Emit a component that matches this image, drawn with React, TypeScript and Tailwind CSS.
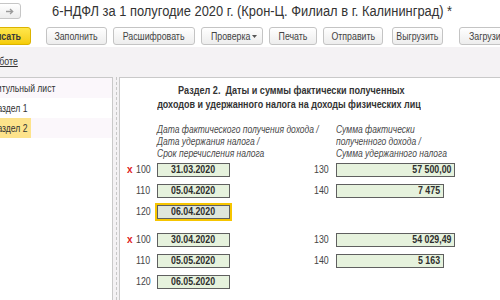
import React from 'react';

const FONT = "'Liberation Sans', Arial, sans-serif";

interface Row {
  code: string;
  value: string;
  mark?: boolean;
  focused?: boolean;
  rightCode?: string;
  rightValue?: string;
  rightWidth?: string;
}

const groups: Row[][] = [
  [
    { code: '100', value: '31.03.2020', mark: true, rightCode: '130', rightValue: '57 500,00', rightWidth: 'w-[119px]' },
    { code: '110', value: '05.04.2020', rightCode: '140', rightValue: '7 475', rightWidth: 'w-[108px]' },
    { code: '120', value: '06.04.2020', focused: true },
  ],
  [
    { code: '100', value: '30.04.2020', mark: true, rightCode: '130', rightValue: '54 029,49', rightWidth: 'w-[119px]' },
    { code: '110', value: '05.05.2020', rightCode: '140', rightValue: '5 163', rightWidth: 'w-[108px]' },
    { code: '120', value: '06.05.2020' },
  ],
];

const toolbar = [
  { label: 'Заполнить', w: 'w-[61px]', ml: 'ml-[15px]' },
  { label: 'Расшифровать', w: 'w-[82px]', ml: 'ml-[6px]' },
  { label: 'Проверка', w: 'w-[62px]', ml: 'ml-[6px]', menu: true },
  { label: 'Печать', w: 'w-[48px]', ml: 'ml-[6px]' },
  { label: 'Отправить', w: 'w-[60px]', ml: 'ml-[6px]' },
  { label: 'Выгрузить', w: 'w-[51px]', ml: 'ml-[9px]' },
  { label: 'Загрузить', w: 'w-[60px]', ml: 'ml-[16px]' },
];

// the source picture is squeezed horizontally, so text is narrowed with scale-x
function Field({ value, width, align, focused }: { value: string; width: string; align: 'center' | 'right'; focused?: boolean }) {
  const box = (
    <div
      className={`${width} h-[14px] border border-[#5f5f5f] flex items-center text-[10px] font-bold text-[#2e2e2e] leading-none whitespace-nowrap ${
        focused ? 'bg-[#dfe6dc]' : 'bg-[#e6f2dd]'
      } ${align === 'center' ? 'justify-center' : 'justify-end pr-[3px]'}`}
    >
      <span className={`inline-block scale-x-[0.88] ${align === 'center' ? 'origin-center' : 'origin-right'}`}>{value}</span>
    </div>
  );
  if (!focused) return box;
  return <div className="-m-[2px] border-2 border-[#f6c500]">{box}</div>;
}

export default function App() {
  return (
    <div className="w-[500px] h-[300px] overflow-hidden bg-white text-[#333]" style={{ fontFamily: FONT }}>
      {/* title line */}
      <div className="flex items-center h-[16px] mt-[3px]">
        <button className="-ml-[4px] w-[25px] h-[16px] rounded-[3px] border border-[#c6c6c6] bg-gradient-to-b from-white to-[#ececec] flex items-center justify-center">
          <svg width="8" height="7" viewBox="0 0 8 7" className="ml-[2px]">
            <path d="M0 3.5h6.5M4 1l2.7 2.5L4 6" stroke="#9a9a9a" strokeWidth="1.3" fill="none" />
          </svg>
        </button>
        <h1 className="ml-[31px] text-[14px] leading-none text-[#333] whitespace-nowrap inline-block origin-left scale-x-[0.92]">
          6-НДФЛ за 1 полугодие 2020 г. (Крон-Ц. Филиал в г. Калининград) *
        </h1>
      </div>

      {/* command bar */}
      <div className="flex items-center h-[18px] mt-[8px] whitespace-nowrap">
        <button className="-ml-[24px] w-[55px] shrink-0 h-[18px] rounded-[3px] border border-[#dcb300] bg-gradient-to-b from-[#ffe74a] to-[#f5cc00] text-[11px] font-bold text-[#3a3a3a] leading-none flex items-center justify-end pr-[9px]">
          <span className="inline-block origin-right scale-x-[0.8]">Записать</span>
        </button>
        {toolbar.map((b) =>
          b.menu ? (
            <button
              key={b.label}
              className={`${b.w} ${b.ml} shrink-0 h-[18px] rounded-[3px] border border-[#c4c4c4] bg-gradient-to-b from-white to-[#ededed] text-[11px] text-[#444] leading-none flex items-center pl-[9px] pr-[5px]`}
            >
              <span className="w-[40px] shrink-0 text-left">
                <span className="inline-block origin-left scale-x-[0.8]">{b.label}</span>
              </span>
              <svg width="5" height="3" viewBox="0 0 5 3" className="ml-auto shrink-0">
                <path d="M0 0h5L2.5 3z" fill="#555" />
              </svg>
            </button>
          ) : (
            <button
              key={b.label}
              className={`${b.w} ${b.ml} shrink-0 h-[18px] rounded-[3px] border border-[#c4c4c4] bg-gradient-to-b from-white to-[#ededed] text-[11px] text-[#444] leading-none flex items-center justify-center`}
            >
              <span className="inline-block origin-center scale-x-[0.8]">{b.label}</span>
            </button>
          )
        )}
      </div>

      {/* link strip */}
      <div className="mt-[2px] h-[30px] bg-[#f4f2f4] pt-[9px]">
        <div className="w-[18px] flex justify-end whitespace-nowrap text-[11px] leading-none">
          <a className="inline-block origin-right scale-x-[0.8] text-[#333] underline">Справка о работе</a>
        </div>
      </div>

      {/* panels */}
      <div className="flex h-[223px] bg-[#f4f2f4]">
        <div className="w-[113px] border-t border-r border-[#c9c9c9] bg-white text-[11px] text-[#333] leading-none whitespace-nowrap">
          <div className="h-[20px] flex items-center bg-[#fbf7fb]">
            <span className="-ml-[8px] inline-block origin-left scale-x-[0.78]">Титульный лист</span>
          </div>
          <div className="h-[20px] flex items-center">
            <span className="-ml-[8px] inline-block origin-left scale-x-[0.78]">Раздел 1</span>
          </div>
          <div className="h-[20px] flex items-center bg-[#fbf7fb]">
            <div className="h-[20px] w-[31px] bg-[#fde38b] flex items-center">
              <span className="-ml-[8px] inline-block origin-left scale-x-[0.78]">Раздел 2</span>
            </div>
          </div>
        </div>
        <div className="w-[6px] flex justify-center">
          <div className="h-full border-l border-dashed border-[#c8c8c8]" />
        </div>
        <div className="flex-1 border-t border-l border-[#c9c9c9] bg-white">
          <div className="pt-[5px] ml-[19px] w-[300px] text-[11.5px] font-bold leading-[14px] text-[#333] whitespace-nowrap">
            <div className="flex justify-center pl-[5px]">
              <span className="whitespace-pre inline-block origin-center scale-x-[0.79]">Раздел 2.  Даты и суммы фактически полученных</span>
            </div>
            <div className="flex justify-center">
              <span className="inline-block origin-center scale-x-[0.78]">доходов и удержанного налога на доходы физических лиц</span>
            </div>
          </div>

          <div className="flex mt-[12px] text-[10.5px] italic leading-[12px] text-[#4a4a4a] whitespace-nowrap">
            <div className="ml-[37px] w-[179px] shrink-0 flex flex-col items-start">
              <span className="inline-block origin-left scale-x-[0.81]">Дата фактического получения дохода /</span>
              <span className="inline-block origin-left scale-x-[0.81]">Дата удержания налога /</span>
              <span className="inline-block origin-left scale-x-[0.81]">Срок перечисления налога</span>
            </div>
            <div className="flex flex-col items-start">
              <span className="inline-block origin-left scale-x-[0.81]">Сумма фактически</span>
              <span className="inline-block origin-left scale-x-[0.81]">полученного дохода /</span>
              <span className="inline-block origin-left scale-x-[0.81]">Сумма удержанного налога</span>
            </div>
          </div>

          <div className="mt-[4px] flex flex-col gap-[14px]">
            {groups.map((g, gi) => (
              <div key={gi} className="flex flex-col gap-[7px]">
                {g.map((r) => (
                  <div key={r.code} className="flex items-center h-[14px] text-[10px] text-[#444] whitespace-nowrap">
                    <span className="ml-[7px] w-[9px] shrink-0 text-[10px] font-bold text-[#e02020] leading-none">
                      {r.mark ? 'x' : ''}
                    </span>
                    <span className="w-[21px] shrink-0 leading-none">
                      <span className="inline-block origin-left scale-x-[0.88]">{r.code}</span>
                    </span>
                    <Field value={r.value} width="w-[73px]" align="center" focused={r.focused} />
                    {r.rightCode && (
                      <>
                        <span className="ml-[84px] w-[22px] shrink-0 leading-none">
                          <span className="inline-block origin-left scale-x-[0.88]">{r.rightCode}</span>
                        </span>
                        <Field value={r.rightValue ?? ''} width={r.rightWidth ?? 'w-[119px]'} align="right" />
                      </>
                    )}
                  </div>
                ))}
              </div>
            ))}
          </div>
        </div>
      </div>
    </div>
  );
}
